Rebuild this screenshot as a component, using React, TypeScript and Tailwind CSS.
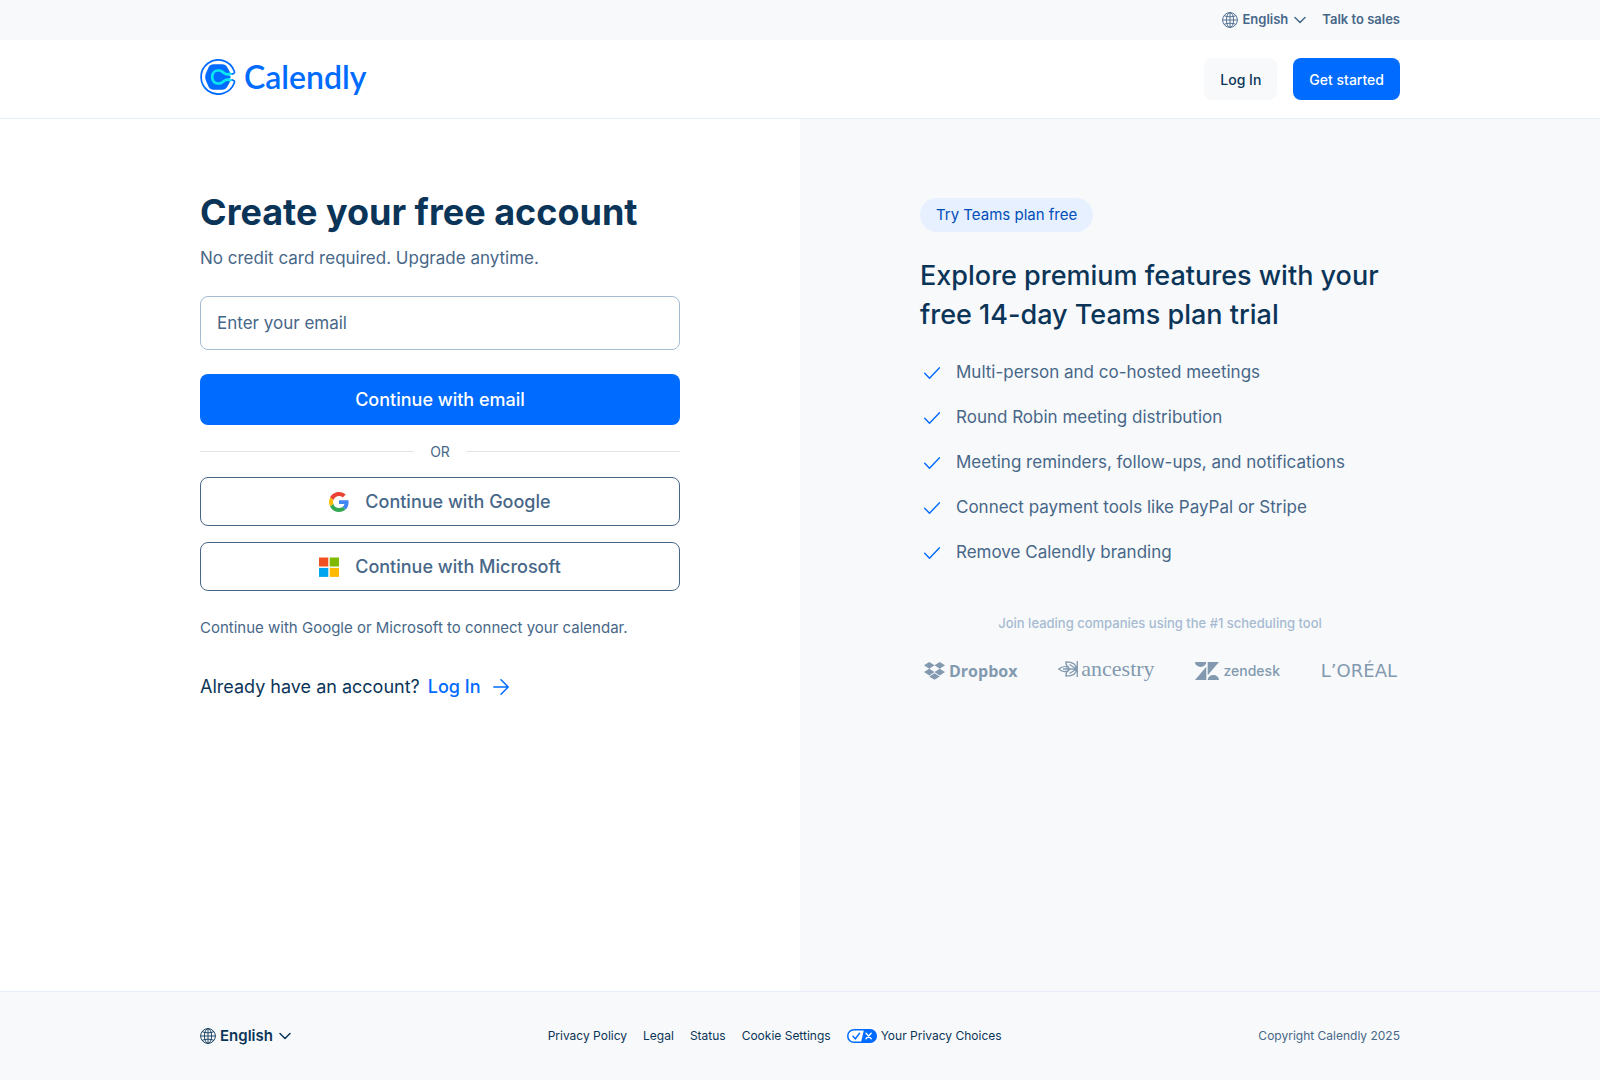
import { useState } from 'react'

const features = [
  'Multi-person and co-hosted meetings',
  'Round Robin meeting distribution',
  'Meeting reminders, follow-ups, and notifications',
  'Connect payment tools like PayPal or Stripe',
  'Remove Calendly branding',
]

function Globe() {
  return (
    <svg className="size-4 shrink-0" viewBox="0 0 16 16" fill="none" stroke="currentColor" strokeWidth="0.9" aria-hidden="true">
      <circle cx="8" cy="8" r="7.4" />
      <ellipse cx="8" cy="8" rx="3.6" ry="7.4" />
      <path d="M8 .6v14.8M.6 8h14.8M2.2 3.7c3.4 1.5 8.2 1.5 11.6 0M2.2 12.3c3.4-1.5 8.2-1.5 11.6 0" />
    </svg>
  )
}

function Chevron() {
  return (
    <svg className="h-2 w-3 shrink-0" viewBox="0 0 12 8" fill="none" stroke="currentColor" strokeWidth="1.5" strokeLinecap="round" strokeLinejoin="round" aria-hidden="true">
      <path d="M1 1.5 6 6.5l5-5" />
    </svg>
  )
}

function CalendlyLogo() {
  return (
    <a href="#home" aria-label="Calendly" className="flex h-10 items-center gap-2 pb-1 text-[#006bff]">
      <svg className="size-9 shrink-0" viewBox="0 0 36 36" fill="none" aria-hidden="true">
        <path
          d="M31.300 15.400 33.600 14.500C34.600 14.100 34.700 13.300 34.300 12.300A17.100 17.100 0 1 0 34.300 23.700C34.700 22.700 34.600 21.900 33.600 21.500L31.300 20.600"
          stroke="#006bff"
          strokeWidth="1.700"
        />
        <path
          d="M13.500 5.200h8.800c2.100 0 3.700.9 4.800 2.700l2.700 4.800c.3.500.2 1.100-.3 1.400L28 15l3 3-3 3 1.500.9c.5.300.6.900.3 1.400l-2.700 4.800c-1.100 1.800-2.700 2.700-4.800 2.700h-8.800c-2.100 0-3.700-.9-4.800-2.700L6.300 22.500c-1.500-2.800-1.500-6.200 0-9l2.400-5.600c1.100-1.800 2.700-2.700 4.800-2.700Z"
          fill="#006bff"
        />
        <path
          d="M31.300 14.500c-3.500 1.400-5.700.8-7.300-.5-1.300-1.100-2.300-2.500-4.700-2.500h-1.500c-3.300 0-5.600 2.800-5.600 6.500s2.300 6.500 5.600 6.500h1.500c2.400 0 3.400-1.400 4.700-2.500 1.600-1.300 3.800-1.900 7.300-.5"
          stroke="#0ae8f0"
          strokeWidth="2.700"
        />
      </svg>
      <span className="font-['Lato',sans-serif] text-[32px] font-semibold leading-9">Calendly</span>
    </a>
  )
}

function GoogleIcon() {
  return (
    <svg className="size-5 shrink-0" viewBox="0 0 48 48" aria-hidden="true">
      <path fill="#EA4335" d="M24 9.500c3.540 0 6.710 1.220 9.210 3.600l6.850-6.850C35.900 2.380 30.470 0 24 0 14.620 0 6.510 5.380 2.560 13.220l7.980 6.190C12.430 13.720 17.740 9.500 24 9.500z" />
      <path fill="#4285F4" d="M46.980 24.550c0-1.570-.15-3.090-.38-4.550H24v9.020h12.940c-.58 2.960-2.260 5.480-4.780 7.180l7.730 6c4.510-4.180 7.090-10.360 7.090-17.650z" />
      <path fill="#FBBC05" d="M10.530 28.590c-.48-1.450-.76-2.990-.76-4.590s.27-3.140.76-4.590l-7.980-6.190C.92 16.460 0 20.120 0 24c0 3.880.92 7.540 2.560 10.780l7.970-6.190z" />
      <path fill="#34A853" d="M24 48c6.480 0 11.930-2.130 15.890-5.810l-7.730-6c-2.150 1.450-4.920 2.300-8.160 2.300-6.260 0-11.570-4.220-13.470-9.910l-7.980 6.190C6.510 42.620 14.620 48 24 48z" />
    </svg>
  )
}

function MicrosoftIcon() {
  return (
    <svg className="size-5 shrink-0" viewBox="0 0 20 20" aria-hidden="true">
      <path fill="#f25022" d="M0 .5h9.300v9H0z" />
      <path fill="#7fba00" d="M10.700.5H20v9h-9.300z" />
      <path fill="#00a4ef" d="M0 10.900h9.300v9H0z" />
      <path fill="#ffb900" d="M10.700 10.900H20v9h-9.300z" />
    </svg>
  )
}

function CompanyLogos() {
  return (
    <ul className="mt-6 flex items-center justify-between pl-1 pr-[3px] text-[#8299af]">
      <li className="flex items-center gap-1">
        <svg className="h-[18px] w-[21px]" viewBox="0 0 21 18" fill="currentColor" aria-hidden="true">
          <path d="M5.250 0 0 3.350 5.250 6.700 10.500 3.350zM15.750 0 10.500 3.350l5.250 3.350L21 3.350zM0 10.050l5.250 3.350 5.250-3.350L5.250 6.700zM15.750 6.700l-5.250 3.350 5.250 3.350L21 10.050zM5.250 14.500l5.250 3.350 5.250-3.350-5.250-3.350z" />
        </svg>
        <span className="font-['Open_Sans',sans-serif] text-[16px] font-bold leading-6">Dropbox</span>
      </li>
      <li className="flex items-center gap-[3px] pb-1">
        <svg className="h-4 w-5" viewBox="0 0 20 16" fill="none" stroke="currentColor" strokeWidth="1.300" aria-hidden="true">
          <path d="M19.300 0v16M5 8h14M18.500 8C18.500 3.500 14.500.9 8 .8c-.3 3 .8 4.700 3 5.900M18.500 8c0 4.500-4 7.100-10.500 7.200-.3-3 .8-4.700 3-5.900M12 8C9 4.700 4.500 4.700.8 8 4.500 11.300 9 11.300 12 8ZM11.500 3.500 18.500 8l-7 4.500" />
        </svg>
        <span className="font-['Liberation_Serif',serif] text-[22px] leading-5">ancestry</span>
      </li>
      <li className="flex items-center gap-1">
        <svg className="h-[18px] w-6" viewBox="0 0 24 18" fill="currentColor" aria-hidden="true">
          <path d="M11.300 4.700V18H0zM11.300 0a5.650 4.900 0 0 1-11.300 0zM12.700 18a5.650 4.900 0 0 1 11.300 0zM12.700 13.300V0H24z" />
        </svg>
        <span className="text-[14px] font-medium leading-6">zendesk</span>
      </li>
      <li className="font-['DejaVu_Sans',sans-serif] text-[18px] leading-6">L’ORÉAL</li>
    </ul>
  )
}

export default function App() {
  const [email, setEmail] = useState('')
  return (
    <div className="flex min-h-screen flex-col bg-white font-['Inter',sans-serif] text-[#0b3558]">
      <div className="bg-[#f8f9fb]">
        <div className="mx-auto flex h-10 max-w-[1200px] items-center justify-end gap-4 text-[13px] font-semibold text-[#476788]">
          <button type="button" className="flex items-center gap-1">
            <Globe />
            <span className="mr-0.5">English</span>
            <Chevron />
          </button>
          <a href="#sales">Talk to sales</a>
        </div>
      </div>

      <header className="border-b border-[#e7edf6]">
        <div className="mx-auto flex h-[78px] max-w-[1200px] items-center justify-between">
          <CalendlyLogo />
          <div className="flex gap-4 text-[14px] font-medium">
            <a href="#login" className="flex h-[42px] items-center rounded-lg bg-[#f8f9fb] px-4">Log In</a>
            <a href="#signup" className="flex h-[42px] items-center rounded-lg bg-[#006bff] px-4 text-white">Get started</a>
          </div>
        </div>
      </header>

      <main className="grid flex-1 grid-cols-2">
        <section className="ml-auto w-full max-w-[600px] pt-[69px]">
          <div className="max-w-[480px]">
            <h1 className="whitespace-nowrap text-[36px] font-bold leading-12">Create your free account</h1>
            <p className="mt-2 text-[17px] leading-7 text-[#476788]">No credit card required. Upgrade anytime.</p>
            <form className="mt-6" onSubmit={(e) => e.preventDefault()}>
              <input
                type="email"
                aria-label="Enter your email"
                placeholder="Enter your email"
                value={email}
                onChange={(e) => setEmail(e.target.value)}
                className="block h-[54px] w-full rounded-lg border border-[#a6bbd1] px-4 text-[17px] placeholder:text-[#476788]"
              />
              <button type="submit" className="mt-6 h-[51px] w-full rounded-lg bg-[#006bff] text-[18px] font-medium text-white">
                Continue with email
              </button>
            </form>
            <div className="flex h-[52px] items-center gap-4 text-[14px] text-[#476788]">
              <span className="h-px flex-1 bg-[#e0e3e8]" />
              OR
              <span className="h-px flex-1 bg-[#e0e3e8]" />
            </div>
            <button type="button" className="flex h-[49px] w-full items-center justify-center gap-4 rounded-lg border border-[#476788] text-[18px] font-medium text-[#476788]">
              <GoogleIcon />
              Continue with Google
            </button>
            <button type="button" className="mt-4 flex h-[49px] w-full items-center justify-center gap-4 rounded-lg border border-[#476788] text-[18px] font-medium text-[#476788]">
              <MicrosoftIcon />
              Continue with Microsoft
            </button>
            <p className="mt-6 whitespace-nowrap text-[15px] leading-[26px] text-[#476788]">Continue with Google or Microsoft to connect your calendar.</p>
            <p className="mt-8 flex items-center gap-2 text-[18px] leading-7">
              Already have an account?
              <a href="#login" className="flex items-center gap-3 font-medium text-[#006bff]">
                Log In
                <svg className="size-4" viewBox="0 0 16 16" fill="none" stroke="currentColor" strokeWidth="1.500" strokeLinecap="round" strokeLinejoin="round" aria-hidden="true">
                  <path d="M.8 8h14.400M8 .8 15.200 8 8 15.200" />
                </svg>
              </a>
            </p>
          </div>
        </section>

        <section className="bg-[#f8f9fb] pt-[79px]">
          <div className="max-w-[600px] pl-[120px]">
            <span className="flex h-[34px] w-fit items-center rounded-full bg-[#e6f0ff] px-4 text-[15px] text-[#004eba]">Try Teams plan free</span>
            <h2 className="mt-6 whitespace-nowrap text-[27px] font-medium leading-[39px]">
              Explore premium features with your
              <br />
              free 14-day Teams plan trial
            </h2>
            <ul className="mt-4 whitespace-nowrap text-[17px] leading-[45px] text-[#476788]">
              {features.map((feature) => (
                <li key={feature} className="flex items-center gap-4 pl-1">
                  <svg className="h-3 w-4 shrink-0 text-[#006bff]" viewBox="0 0 16 12" fill="none" stroke="currentColor" strokeWidth="1.400" strokeLinecap="round" strokeLinejoin="round" aria-hidden="true">
                    <path d="M.7 6.300 5.500 11.200 15.500.8" />
                  </svg>
                  {feature}
                </li>
              ))}
            </ul>
            <p className="mt-9 text-center text-[13px] font-medium leading-6 text-[#a6bbd1]">Join leading companies using the #1 scheduling tool</p>
            <CompanyLogos />
          </div>
        </section>
      </main>

      <footer className="border-t border-[#e7edf6] bg-[#f8f9fb]">
        <div className="mx-auto flex h-[88px] max-w-[1200px] items-center justify-between text-[12px]">
          <button type="button" className="flex items-center gap-1 text-[15px] font-semibold">
            <Globe />
            <span className="mr-0.5">English</span>
            <Chevron />
          </button>
          <nav className="flex items-center gap-4">
            <a href="#privacy">Privacy Policy</a>
            <a href="#legal">Legal</a>
            <a href="#status">Status</a>
            <a href="#cookies">Cookie Settings</a>
            <a href="#choices" className="flex items-center gap-1">
              <svg className="h-[14px] w-[30px]" viewBox="0 0 30 14" fill="none" aria-hidden="true">
                <rect x=".75" y=".75" width="28.500" height="12.500" rx="6.250" fill="#fff" stroke="#006bff" strokeWidth="1.500" />
                <path d="M17 .5h6a6.500 6.500 0 0 1 0 13h-9z" fill="#006bff" />
                <path d="m6 7.200 2.300 2.600L12.600 4.300" stroke="#006bff" strokeWidth="1.400" strokeLinecap="round" />
                <path d="m19 4.300 5.200 5.400M24.200 4.300 19 9.700" stroke="#fff" strokeWidth="1.400" strokeLinecap="round" />
              </svg>
              Your Privacy Choices
            </a>
          </nav>
          <p className="text-[#476788]">Copyright Calendly 2025</p>
        </div>
      </footer>
    </div>
  )
}
